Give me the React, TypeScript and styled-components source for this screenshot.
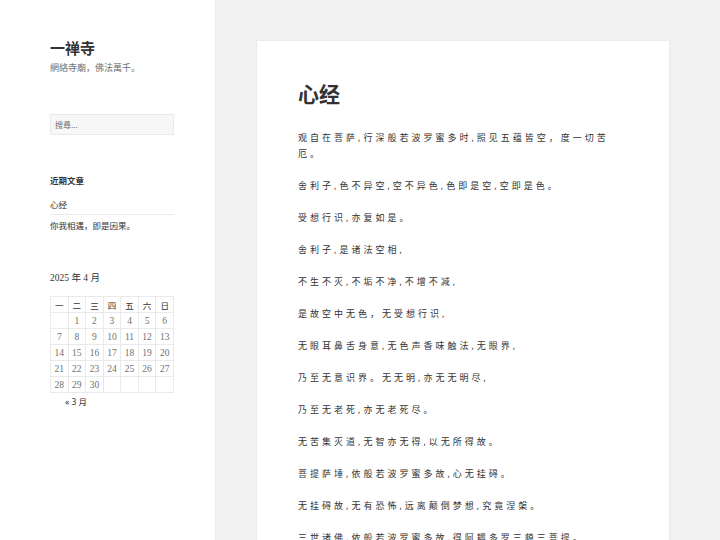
import React from "react";
import styled, { createGlobalStyle } from "styled-components";

const Global = createGlobalStyle`
  html, body { margin: 0; padding: 0; }
  body {
    background: #f1f1f1;
    font-family: "Noto Sans", "Noto Sans CJK SC", sans-serif;
    color: #333;
  }
`;

const Page = styled.div`
  display: flex;
  align-items: flex-start;
  height: 540px;
  overflow: hidden;
`;

const Sidebar = styled.aside`
  width: 215px;
  flex: none;
  height: 540px;
  background: #fff;
  box-shadow: 0 0 1px rgba(0, 0, 0, 0.18);
  box-sizing: border-box;
  padding: 38px 41px 0 50px;
`;

const SiteTitle = styled.h1`
  margin: 0;
  font-family: "Noto Sans CJK SC", sans-serif;
  font-size: 15px;
  line-height: 20px;
  font-weight: 700;
  color: #333;
`;

const Tagline = styled.p`
  margin: 3px 0 0;
  font-family: "Noto Sans CJK SC", sans-serif;
  font-size: 9px;
  line-height: 14px;
  color: #707070;
`;

const Search = styled.div`
  margin-top: 39px;
  width: 124px;
  height: 21px;
  box-sizing: border-box;
  background: #f7f7f7;
  border: 1px solid #eaeaea;
  display: flex;
  align-items: center;
  padding-left: 4px;
  font-family: "Noto Sans CJK SC", sans-serif;
  font-size: 8px;
  color: #707070;
`;

const Widget = styled.section<{ $mt: number }>`
  margin-top: ${(p) => p.$mt}px;
  width: 124px;
`;

const WidgetTitle = styled.h2`
  margin: 0;
  font-family: "Noto Sans CJK SC", sans-serif;
  font-size: 8.5px;
  line-height: 14px;
  font-weight: 700;
  color: #333;
`;

const PostList = styled.ul`
  list-style: none;
  margin: 10px 0 0;
  padding: 0;
`;

const PostItem = styled.li`
  font-family: "Noto Sans CJK SC", sans-serif;
  font-size: 8.5px;
  line-height: 14px;
  color: #333;
  padding: 0 0 3px;
  & + & {
    border-top: 1px solid #eaeaea;
    padding-top: 3px;
  }
`;

const CalCaption = styled.div`
  font-family: "Liberation Serif", "Noto Sans CJK SC", serif;
  font-size: 9.5px;
  line-height: 14px;
  color: #333;
  margin-bottom: 11px;
`;

const Table = styled.table`
  border-collapse: collapse;
  width: 124px;
  table-layout: fixed;
`;

const Th = styled.th`
  border: 1px solid #eaeaea;
  height: 15px;
  padding: 0;
  font-family: "Noto Sans CJK SC", sans-serif;
  font-size: 8.5px;
  font-weight: 400;
  color: #333;
  text-align: center;
`;

const Td = styled.td`
  border: 1px solid #eaeaea;
  height: 15px;
  padding: 0;
  font-family: "Liberation Serif", serif;
  font-size: 9.5px;
  color: #707070;
  text-align: center;
`;

const CalNav = styled.div`
  padding: 2px 0 0 15px;
  font-family: "Noto Sans", "Noto Sans CJK SC", sans-serif;
  font-size: 8.5px;
  line-height: 14px;
  color: #333;
`;

const Card = styled.article`
  margin: 41px 0 0 42px;
  width: 412px;
  height: 520px;
  flex: none;
  background: #fff;
  box-shadow: 0 0 1px rgba(0, 0, 0, 0.15);
  box-sizing: border-box;
  padding: 38px 41px 0;
`;

const EntryTitle = styled.h1`
  margin: 0 0 23px;
  font-family: "Noto Sans CJK SC", sans-serif;
  font-size: 21px;
  line-height: 28px;
  font-weight: 700;
  color: #333;
`;

const Entry = styled.div`
  max-width: 318px;
`;

const Para = styled.p`
  margin: 0 0 16px;
  font-family: "Noto Sans", "Noto Sans CJK SC", sans-serif;
  font-size: 9px;
  line-height: 16px;
  letter-spacing: 3px;
  color: #333;
`;

const paras = [
  "观自在菩萨,行深般若波罗蜜多时,照见五蕴皆空，度一切苦厄。",
  "舍利子,色不异空,空不异色,色即是空,空即是色。",
  "受想行识,亦复如是。",
  "舍利子,是诸法空相,",
  "不生不灭,不垢不净,不增不减,",
  "是故空中无色，无受想行识,",
  "无眼耳鼻舌身意,无色声香味触法,无眼界,",
  "乃至无意识界。无无明,亦无无明尽,",
  "乃至无老死,亦无老死尽。",
  "无苦集灭道,无智亦无得,以无所得故。",
  "菩提萨埵,依般若波罗蜜多故,心无挂碍。",
  "无挂碍故,无有恐怖,远离颠倒梦想,究竟涅槃。",
  "三世诸佛,依般若波罗蜜多故,得阿耨多罗三藐三菩提。",
];

const heads = ["一", "二", "三", "四", "五", "六", "日"];
const weeks: (number | null)[][] = [
  [null, 1, 2, 3, 4, 5, 6],
  [7, 8, 9, 10, 11, 12, 13],
  [14, 15, 16, 17, 18, 19, 20],
  [21, 22, 23, 24, 25, 26, 27],
  [28, 29, 30, null, null, null, null],
];

export default function App() {
  return (
    <>
      <Global />
      <Page>
        <Sidebar>
          <SiteTitle>一禅寺</SiteTitle>
          <Tagline>網絡寺廟，佛法萬千。</Tagline>
          <Search>搜尋...</Search>
          <Widget $mt={38}>
            <WidgetTitle>近期文章</WidgetTitle>
            <PostList>
              <PostItem>心经</PostItem>
              <PostItem>你我相遇，即是因果。</PostItem>
            </PostList>
          </Widget>
          <Widget $mt={36}>
            <CalCaption>2025 年 4 月</CalCaption>
            <Table>
              <thead>
                <tr>
                  {heads.map((h) => (
                    <Th key={h}>{h}</Th>
                  ))}
                </tr>
              </thead>
              <tbody>
                {weeks.map((w, i) => (
                  <tr key={i}>
                    {w.map((d, j) => (
                      <Td key={j}>{d ?? ""}</Td>
                    ))}
                  </tr>
                ))}
              </tbody>
            </Table>
            <CalNav>« 3 月</CalNav>
          </Widget>
        </Sidebar>
        <Card>
          <EntryTitle>心经</EntryTitle>
          <Entry>
            {paras.map((p, i) => (
              <Para key={i}>{p}</Para>
            ))}
          </Entry>
        </Card>
      </Page>
    </>
  );
}
